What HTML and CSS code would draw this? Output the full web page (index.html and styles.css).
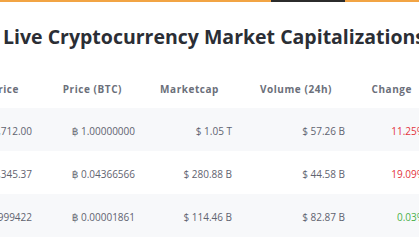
FILE: index.html
```html
<!DOCTYPE html>
<html>
<head>
<meta charset="utf-8">
<link rel="stylesheet" href="styles.css">
</head>
<body>
<div class="topbar"><span class="tb-left"></span><span class="tb-dark"></span><span class="tb-right"></span></div>
<h1 class="title">Live Cryptocurrency Market Capitalizations</h1>
<div class="table">
  <div class="row head">
    <div class="cell">Price</div>
    <div class="cell">Price (BTC)</div>
    <div class="cell">Marketcap</div>
    <div class="cell">Volume (24h)</div>
    <div class="cell">Change</div>
  </div>
  <div class="row odd">
    <div class="cell">$ 53,712.00</div>
    <div class="cell"><span class="baht">฿</span> 1.00000000</div>
    <div class="cell">$ 1.05 T</div>
    <div class="cell">$ 57.26 B</div>
    <div class="cell neg">11.25%</div>
  </div>
  <div class="row">
    <div class="cell">$ 2,345.37</div>
    <div class="cell"><span class="baht">฿</span> 0.04366566</div>
    <div class="cell">$ 280.88 B</div>
    <div class="cell">$ 44.58 B</div>
    <div class="cell neg">19.09%</div>
  </div>
  <div class="row odd">
    <div class="cell">$ 0.999422</div>
    <div class="cell"><span class="baht">฿</span> 0.00001861</div>
    <div class="cell">$ 114.46 B</div>
    <div class="cell">$ 82.87 B</div>
    <div class="cell pos">0.03%</div>
  </div>
</div>
</body>
</html>
```
FILE: styles.css
```css
html, body {
  margin: 0;
  padding: 0;
  background: #fff;
  overflow: hidden;
  width: 419px;
  height: 240px;
}
body {
  font-family: "Open Sans", "Noto Sans", sans-serif;
}
.topbar {
  display: flex;
  height: 2px;
}
.tb-left { width: 271px; background: #f2a444; }
.tb-dark { width: 74px; background: #2b2b2b; }
.tb-right { flex: 1; background: #f2a444; }
.title {
  margin: 0;
  padding: 21px 0 0 3px;
  box-sizing: border-box;
  height: 64px;
  font-size: 19.5px;
  font-weight: 700;
  color: #2b2e35;
  white-space: nowrap;
  line-height: 28px;
}
.table {
  margin-left: -56px;
}
.row {
  display: grid;
  grid-template-columns: 100px 103px 97px 113px 80px;
  height: 43px;
  align-items: center;
}
.row.head {
  height: 42px;
}
.row.odd { background: #f7f8fa; }
.cell {
  text-align: right;
  padding-right: 12px;
  padding-top: 2px;
  font-size: 10px;
  color: #5f6370;
  white-space: nowrap;
}
.baht {
  font-family: "DejaVu Sans", sans-serif;
  font-size: 10.5px;
  color: #6a6e78;
}
.head .cell {
  padding-right: 25px;
  padding-top: 4px;
  font-weight: 700;
  font-size: 10px;
  color: #6b6f7a;
  letter-spacing: 0.55px;
}
.neg { color: #e3343c; }
.pos { color: #49b04a; }
```
